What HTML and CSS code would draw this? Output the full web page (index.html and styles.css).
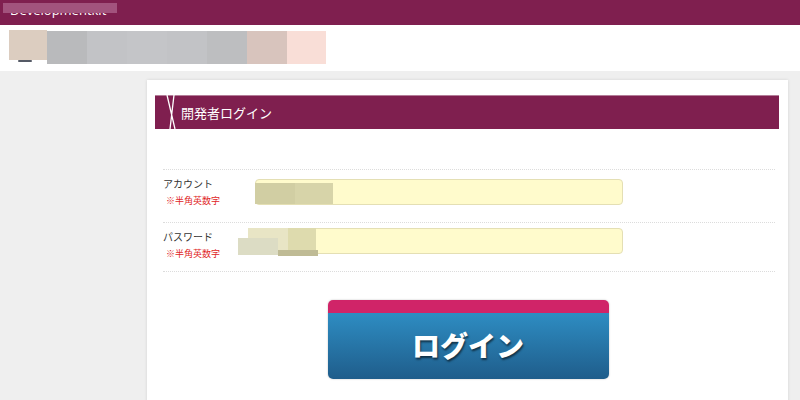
FILE: index.html
```html
<!DOCTYPE html>
<html lang="ja">
<head>
<meta charset="utf-8">
<link rel="stylesheet" href="styles.css">
</head>
<body>
<header class="topbar">
  <span class="brand">Developmentkit</span>
  <span class="mask mask-brand"></span>
</header>
<div class="logo-band">
  <div class="logo">
    <span class="lb lb1"><span class="mark"></span></span>
    <span class="lb lb2"></span>
    <span class="lb lb3"></span>
    <span class="lb lb4"></span>
    <span class="lb lb5"></span>
    <span class="lb lb6"></span>
    <span class="lb lb7"></span>
    <span class="lb lb8"></span>
  </div>
</div>
<main class="page">
  <section class="card">
    <h1 class="card-title">
      <svg class="deco" width="14" height="34" viewBox="0 0 14 34"><path d="M3 0 L11 34 M10 0 L6 34" stroke="#fff" stroke-width="1.3" fill="none"/></svg>
      <span>開発者ログイン</span>
    </h1>
    <form class="form">
      <div class="row row-account">
        <div class="label">
          <div class="label-name">アカウント</div>
          <div class="label-note">※半角英数字</div>
        </div>
        <div class="field">
          <span class="input"></span>
          <span class="mask m1"></span>
          <span class="mask m2"></span>
        </div>
      </div>
      <div class="row row-password">
        <div class="label">
          <div class="label-name">パスワード</div>
          <div class="label-note">※半角英数字</div>
        </div>
        <div class="field">
          <span class="input"></span>
          <span class="mask m3"></span>
          <span class="mask m4"></span>
          <span class="mask m5"></span>
          <span class="mask m6"></span>
        </div>
      </div>
      <div class="actions">
        <button type="button" class="login-btn"><span>ログイン</span></button>
      </div>
    </form>
  </section>
</main>
</body>
</html>
```
FILE: styles.css
```css
* { box-sizing: border-box; }
html, body { margin: 0; padding: 0; }
body {
  width: 800px;
  height: 400px;
  overflow: hidden;
  background: #efefef;
  font-family: "Noto Sans CJK JP", "Noto Sans", sans-serif;
}
.topbar {
  position: relative;
  height: 25px;
  background: #7f1f4f;
  padding: 3px 0 0 10px;
}
.brand {
  color: #fff;
  font-family: "Open Sans", "DejaVu Sans", sans-serif;
  font-size: 13px;
  line-height: 14px;
  display: block;
}
.mask { position: absolute; display: block; }
.mask-brand {
  left: 3px; top: 3px; width: 114px; height: 10px;
  background: #a2537d;
}
.logo-band {
  height: 46px;
  background: #fff;
  padding: 5px 0 0 9px;
}
.logo { display: flex; align-items: flex-start; }
.lb { display: block; width: 40px; height: 33px; margin-top: 1px; }
.lb1 { width: 38px; height: 30px; margin-top: 0; background: #dccdc0; position: relative; z-index: 1; }
.mark {
  position: absolute;
  left: 9px; top: 30px;
  width: 14px; height: 2px;
  background: #555a66;
  border-radius: 1px;
}
.lb2 { background: #b9babc; }
.lb3 { background: #c2c3c6; }
.lb4 { background: #c4c5c8; }
.lb5 { background: #c2c3c6; }
.lb6 { background: #bdbec0; }
.lb7 { background: #d8c4bd; }
.lb8 { width: 39px; background: #f9ded7; }
.page {
  padding: 9px 12px 0 147px;
}
.card {
  background: #fff;
  width: 641px;
  height: 330px;
  padding: 15px 9px 0 8px;
  box-shadow: 0 0 3px rgba(0,0,0,0.12);
}
.card-title {
  margin: 0;
  height: 34px;
  background: #7f1f4f;
  border-top: 1px solid #b37d98;
  display: flex;
  align-items: center;
  padding-left: 9px;
  color: #fff;
  font-weight: normal;
  font-size: 13px;
}
.deco { margin-top: -1px; margin-right: 3px; }
.form {
  margin: 40px 4px 0 8px;
}
.row {
  display: flex;
  align-items: flex-start;
  border-top: 1px dotted #dcdcdc;
}
.row-account { height: 53px; }
.row-password { height: 50px; border-bottom: 1px dotted #dcdcdc; }
.label { width: 92px; padding-top: 7px; }
.label-name { font-size: 10px; color: #333; line-height: 14px; }
.label-note { font-size: 9px; color: #e01e1e; line-height: 14px; margin: 3px 0 0 3px; }
.field { position: relative; height: 26px; }
.row-account .field { margin-top: 9px; }
.row-password .field { margin-top: 5px; }
.input {
  display: block;
  width: 368px;
  height: 26px;
  background: #fffbcc;
  border: 1px solid #e4dfb4;
  border-radius: 4px;
}
.m1 { left: 0; top: 4px; width: 40px; height: 21px; background: #d1cea3; }
.m2 { left: 40px; top: 4px; width: 38px; height: 21px; background: #d7d4a9; }
.m3 { left: -7px; top: 0; width: 40px; height: 22px; background: #e8e5c5; }
.m4 { left: 33px; top: 0; width: 28px; height: 22px; background: #dedbae; }
.m5 { left: -17px; top: 10px; width: 40px; height: 17px; background: #dcdcc4; }
.m6 { left: 23px; top: 22px; width: 40px; height: 6px; background: #bfbb95; }
.actions {
  display: flex;
  justify-content: center;
  padding: 28px 0 0 0;
}
.login-btn {
  width: 281px;
  height: 79px;
  border: 0;
  border-radius: 5px;
  padding: 13px 0 0 0;
  background: linear-gradient(#d02468, #d02468) top / 100% 13px no-repeat,
              linear-gradient(#3196cd, #1f5d8b);
  box-shadow: 0 0 2px rgba(0,0,0,0.25);
  color: #fff;
  font-family: "Noto Sans CJK JP", sans-serif;
  font-weight: 900;
  font-size: 28px;
  text-shadow: 1px 2px 2px rgba(0,0,0,0.55);
  display: flex;
  align-items: center;
  justify-content: center;
  margin-left: -2px;
}
.login-btn span { display: block; margin-top: -3px; }
```
